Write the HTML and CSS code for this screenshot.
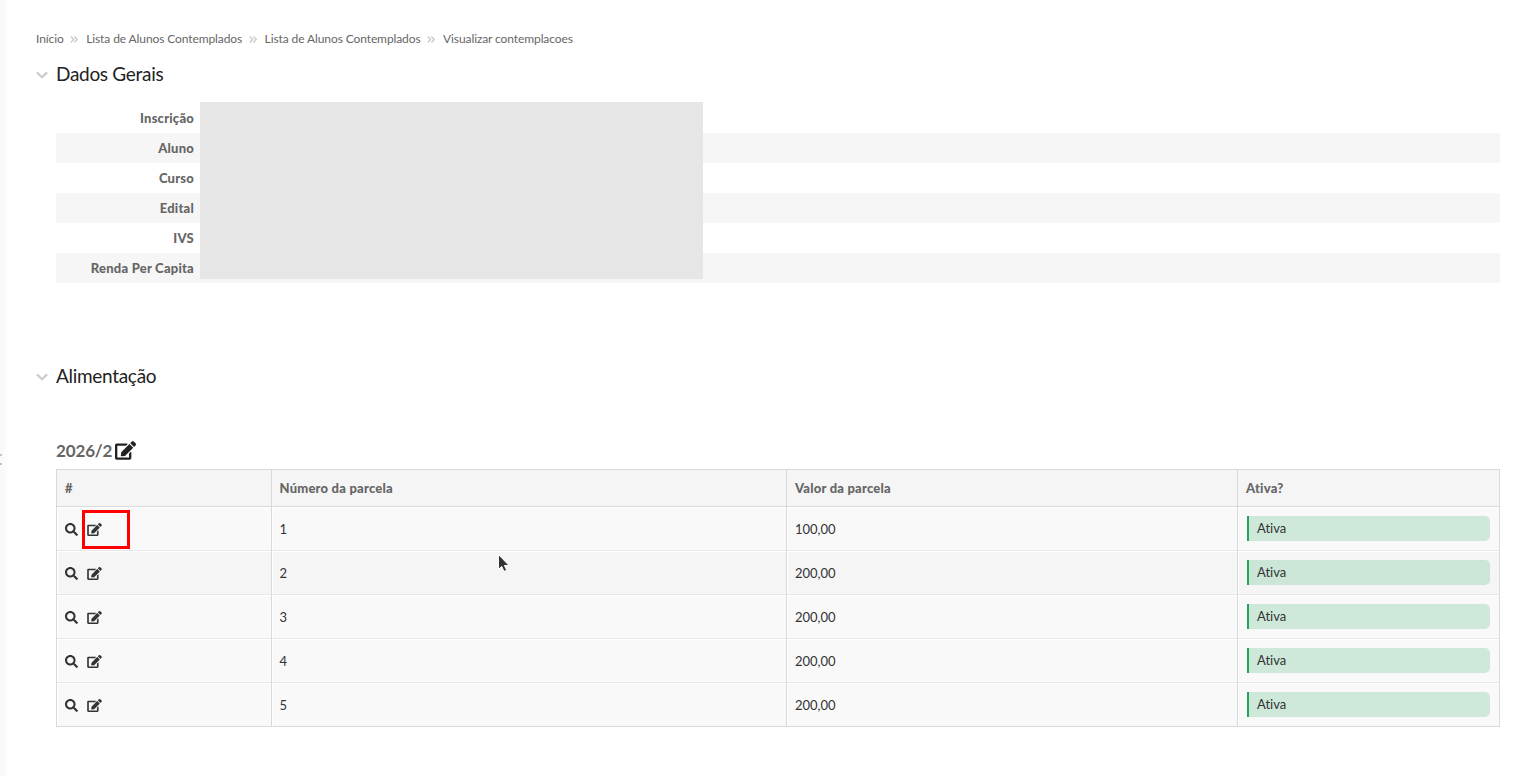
FILE: index.html
```
<!DOCTYPE html>
<html lang="pt-br">
<head>
  <meta charset="utf-8">
  <title>Visualizar contemplacoes</title>
  <link rel="stylesheet" href="styles.css">
</head>
<body>
  <svg class="symbols" width="0" height="0">
    <symbol id="icon-edit" viewBox="0 0 576 512">
      <path d="M402.6 83.2l90.2 90.2c3.8 3.8 3.8 10 0 13.8L274.4 405.6l-92.8 10.3c-12.4 1.4-22.9-9.1-21.5-21.5l10.3-92.8L388.8 83.2c3.8-3.8 10-3.8 13.8 0zm162-22.9l-48.8-48.8c-15.2-15.2-39.9-15.2-55.2 0l-35.4 35.4c-3.8 3.8-3.8 10 0 13.8l90.2 90.2c3.8 3.8 10 3.8 13.8 0l35.4-35.4c15.2-15.3 15.2-40 0-55.2zM384 346.2V448H64V128h229.8c3.2 0 6.2-1.3 8.5-3.5l40-40c7.6-7.6 2.2-20.5-8.5-20.5H48C21.5 64 0 85.5 0 112v352c0 26.5 21.5 48 48 48h352c26.5 0 48-21.5 48-48V306.2c0-10.7-12.9-16-20.5-8.5l-40 40c-2.2 2.3-3.5 5.3-3.5 8.5z"/>
    </symbol>
    <symbol id="icon-search" viewBox="0 0 512 512">
      <path d="M505 442.7L405.3 343c-4.5-4.5-10.6-7-17-7H372c27.6-35.3 44-79.7 44-128C416 93.1 322.9 0 208 0S0 93.1 0 208s93.1 208 208 208c48.3 0 92.7-16.4 128-44v16.3c0 6.4 2.5 12.5 7 17l99.7 99.7c9.4 9.4 24.6 9.4 33.9 0l28.3-28.3c9.4-9.4 9.4-24.6.1-34zM208 336c-70.7 0-128-57.2-128-128 0-70.7 57.2-128 128-128 70.7 0 128 57.2 128 128 0 70.7-57.2 128-128 128z"/>
    </symbol>
    <symbol id="icon-down" viewBox="0 0 12 8">
      <path d="M.9 1.4L6 6.3l5.1-4.9" fill="none" stroke="currentColor" stroke-width="2.2"/>
    </symbol>
    <symbol id="icon-double" viewBox="0 0 8 7">
      <path d="M.8.6l2.8 2.9L.8 6.4M4.4.6l2.8 2.9-2.8 2.9" fill="none" stroke="currentColor" stroke-width="1.5"/>
    </symbol>
  </svg>

  <div class="sidebar-shadow"></div>
  <div class="sidebar-handle"></div>

  <main class="content">
    <ul class="breadcrumbs">
      <li><a>Início</a><svg><use href="#icon-double"/></svg></li>
      <li><a>Lista de Alunos Contemplados</a><svg><use href="#icon-double"/></svg></li>
      <li><a>Lista de Alunos Contemplados</a><svg><use href="#icon-double"/></svg></li>
      <li><a>Visualizar contemplacoes</a></li>
    </ul>

    <section class="box box-general">
      <h3><svg><use href="#icon-down"/></svg>Dados Gerais</h3>
      <div class="info">
        <div class="info-row">Inscrição</div>
        <div class="info-row">Aluno</div>
        <div class="info-row">Curso</div>
        <div class="info-row">Edital</div>
        <div class="info-row">IVS</div>
        <div class="info-row">Renda Per Capita</div>
        <div class="info-mask"></div>
      </div>
    </section>

    <section class="box">
      <h3><svg><use href="#icon-down"/></svg>Alimentação</h3>
      <h4>2026/2<svg><use href="#icon-edit"/></svg></h4>
      <table>
        <colgroup>
          <col class="col-actions">
          <col class="col-number">
          <col class="col-value">
          <col class="col-status">
        </colgroup>
        <thead>
          <tr>
            <th>#</th>
            <th>Número da parcela</th>
            <th>Valor da parcela</th>
            <th>Ativa?</th>
          </tr>
        </thead>
        <tbody>
          <tr>
            <td><div class="actions"><svg class="search"><use href="#icon-search"/></svg><svg class="edit"><use href="#icon-edit"/></svg><span class="highlight"></span></div></td>
            <td>1</td>
            <td>100,00</td>
            <td><div class="status">Ativa</div></td>
          </tr>
          <tr>
            <td><div class="actions"><svg class="search"><use href="#icon-search"/></svg><svg class="edit"><use href="#icon-edit"/></svg></div></td>
            <td>2</td>
            <td>200,00</td>
            <td><div class="status">Ativa</div></td>
          </tr>
          <tr>
            <td><div class="actions"><svg class="search"><use href="#icon-search"/></svg><svg class="edit"><use href="#icon-edit"/></svg></div></td>
            <td>3</td>
            <td>200,00</td>
            <td><div class="status">Ativa</div></td>
          </tr>
          <tr>
            <td><div class="actions"><svg class="search"><use href="#icon-search"/></svg><svg class="edit"><use href="#icon-edit"/></svg></div></td>
            <td>4</td>
            <td>200,00</td>
            <td><div class="status">Ativa</div></td>
          </tr>
          <tr>
            <td><div class="actions"><svg class="search"><use href="#icon-search"/></svg><svg class="edit"><use href="#icon-edit"/></svg></div></td>
            <td>5</td>
            <td>200,00</td>
            <td><div class="status">Ativa</div></td>
          </tr>
        </tbody>
      </table>
    </section>
  </main>

  <svg class="pointer" viewBox="0 0 14 21">
    <path d="M1.5 1.5v14.8l3.2-2.9 2.3 5 2.7-1.2-2.3-4.7h4.6z"/>
  </svg>
</body>
</html>
```

FILE: styles.css
```
body {
  margin: 0;
  height: 776px;
  overflow: hidden;
  position: relative;
  background-color: #fff;
  color: #333;
  font-family: Lato, sans-serif;
  font-size: 13px;
  font-variant-ligatures: none;
}

svg {
  fill: currentColor;
}

.symbols {
  position: absolute;
}

/* edge of the collapsed menu */
.sidebar-shadow {
  position: absolute;
  top: 0;
  left: 0;
  width: 8px;
  height: 100%;
  background: linear-gradient(to right, #f9f9f9 0, #fafafa 4px, #fefefe 8px);
}

.sidebar-handle {
  position: absolute;
  top: 454px;
  left: 0;
  width: 2px;
  height: 2px;
  background-color: #c4c4c4;
  box-shadow: 0 9px #c4c4c4;
}

.content {
  padding: 30px 18px 0 36px;
}

.breadcrumbs {
  display: flex;
  margin: 0;
  padding: 0;
  height: 18px;
  line-height: 18px;
  list-style: none;
  font-size: 12px;
  letter-spacing: -0.1px;
  color: #666;
}

.breadcrumbs li {
  display: flex;
  align-items: center;
}

.breadcrumbs svg {
  width: 8px;
  height: 7px;
  margin: 1px 8px 0 6.5px;
  color: #ccc;
}

.box {
  padding-left: 20px;
}

.box-general {
  height: 302px;
}

h3 {
  position: relative;
  margin: 0;
  padding-top: 14px;
  line-height: 24px;
  font-size: 19px;
  font-weight: normal;
  letter-spacing: -0.3px;
  color: #222;
}

h3 svg {
  position: absolute;
  top: 23px;
  left: -20px;
  width: 12px;
  height: 8px;
  color: #ccc;
}

.info {
  position: relative;
  padding-top: 17px;
}

.info-row {
  box-sizing: border-box;
  height: 30px;
  padding-right: 1306px;
  line-height: 30px;
  text-align: right;
  white-space: nowrap;
  font-weight: 900;
  letter-spacing: 0.22px;
  color: #666;
}

.info-row:nth-child(even) {
  background-color: #f6f6f6;
}

.info-mask {
  position: absolute;
  top: 16px;
  left: 144px;
  width: 503px;
  height: 177px;
  background-color: #e6e6e6;
}

h4 {
  display: flex;
  align-items: center;
  margin: 50px 0 7px;
  height: 24px;
  font-size: 17px;
  font-weight: bold;
  letter-spacing: -0.15px;
  color: #666;
}

h4 svg {
  width: 21px;
  height: 19px;
  margin-left: 3px;
  color: #222;
}

table {
  width: 1444px;
  table-layout: fixed;
  border-collapse: separate;
  border-spacing: 0;
  border-top: 1px solid #d9d9d9;
  border-left: 1px solid #d9d9d9;
}

.col-actions {
  width: 215px;
}

.col-number {
  width: 515px;
}

.col-value {
  width: 451px;
}

.col-status {
  width: 262px;
}

th,
td {
  box-sizing: border-box;
  padding: 0 9px 0 8px;
  text-align: left;
  border-right: 1px solid #d9d9d9;
}

th:nth-child(2),
td:nth-child(2) {
  padding-left: 7.5px;
}

th {
  height: 37px;
  background-color: #f5f5f5;
  border-bottom: 1px solid #d9d9d9;
  font-weight: 900;
  letter-spacing: 0.22px;
  color: #666;
}

td {
  height: 44px;
  background-color: #f9f9f9;
  border-bottom: 1px solid #e8e8e8;
  box-shadow: inset 1px 1px #fff;
}

tbody tr:nth-child(2) td {
  background-color: #f5f5f5;
}

tbody tr:last-child td {
  border-bottom-color: #d9d9d9;
}

.actions {
  position: relative;
  display: flex;
  align-items: center;
  padding-top: 1px;
  color: #333;
}

.actions .search {
  width: 13px;
  height: 13px;
}

.actions .edit {
  width: 15px;
  height: 13px;
  margin-left: 9px;
}

.highlight {
  position: absolute;
  top: -12px;
  left: 16.5px;
  width: 42px;
  height: 33px;
  border: 3px solid #f00;
}

.status {
  height: 25px;
  margin-left: 1px;
  padding-left: 8px;
  line-height: 25px;
  border-left: 2px solid #21a558;
  border-radius: 0 5px 5px 0;
  background-color: rgba(33, 165, 88, 0.2);
}

.pointer {
  position: absolute;
  top: 553px;
  left: 497px;
  width: 14px;
  height: 21px;
  fill: #333;
  stroke: #fff;
}
```
